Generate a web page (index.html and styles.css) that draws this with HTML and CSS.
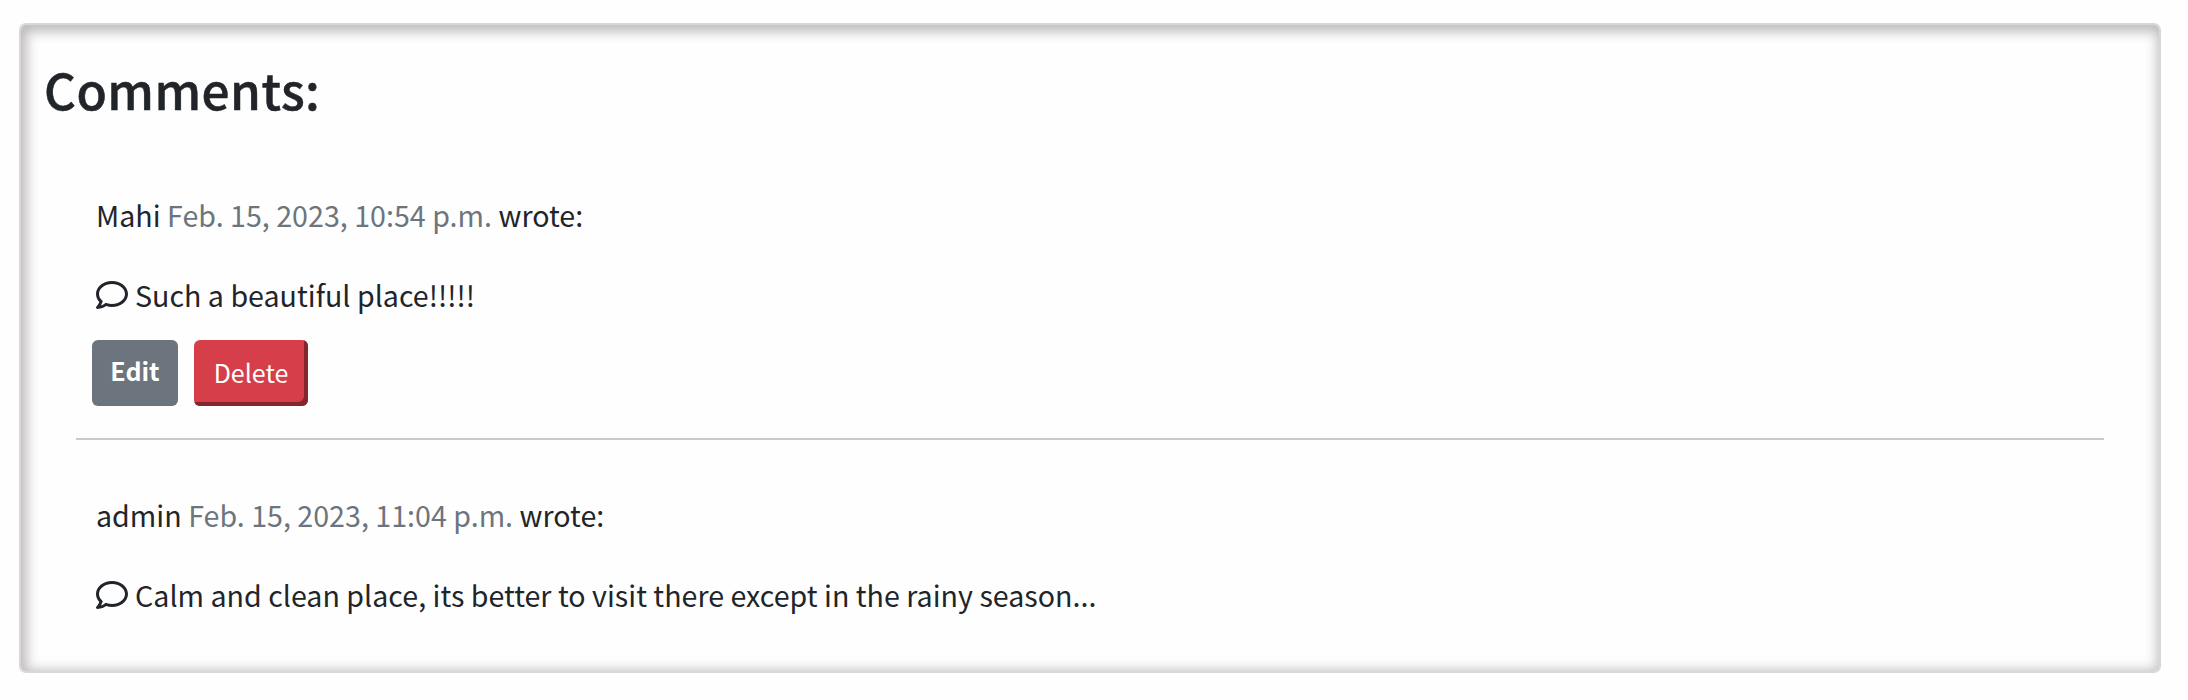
FILE: index.html
```html
<!DOCTYPE html>
<html lang="en">
<head>
<meta charset="utf-8">
<title>Comments</title>
<link rel="stylesheet" href="styles.css">
</head>
<body>
<section class="panel">
  <h2 class="title">Comments:</h2>
  <div class="list">
    <article class="comment">
      <p class="meta"><span>Mahi <span class="date">Feb. 15, 2023, 10:54 p.m.</span> wrote:</span></p>
      <p class="text"><svg class="icon" viewBox="0 0 512 512"><path d="M256 32C114.600 32 0 125.100 0 240c0 47.600 19.900 91.200 52.900 126.300C38 405.700 7 439.100 6.500 439.500c-6.600 7-8.400 17.200-4.600 26S14.400 480 24 480c61.500 0 110-25.700 139.100-46.300C192 442.800 223.200 448 256 448c141.400 0 256-93.100 256-208S397.400 32 256 32zm0 368c-26.700 0-53.100-4.100-78.400-12.100l-22.700-7.200-19.500 13.800c-14.300 10.100-33.900 21.400-57.500 29 7.300-12.100 14.400-25.700 19.900-40.200l10.600-28.100-20.600-21.800C69.700 314.100 48 282.200 48 240c0-88.200 93.300-160 208-160s208 71.800 208 160-93.300 160-208 160z"/></svg><span>Such a beautiful place!!!!!</span></p>
      <div class="actions">
        <button class="btn edit">Edit</button>
        <button class="btn delete">Delete</button>
      </div>
    </article>
    <hr class="rule">
    <article class="comment">
      <p class="meta"><span>admin <span class="date">Feb. 15, 2023, 11:04 p.m.</span> wrote:</span></p>
      <p class="text"><svg class="icon" viewBox="0 0 512 512"><path d="M256 32C114.600 32 0 125.100 0 240c0 47.600 19.900 91.200 52.900 126.300C38 405.700 7 439.100 6.500 439.500c-6.600 7-8.400 17.200-4.600 26S14.400 480 24 480c61.500 0 110-25.700 139.100-46.300C192 442.800 223.200 448 256 448c141.400 0 256-93.100 256-208S397.400 32 256 32zm0 368c-26.700 0-53.100-4.100-78.400-12.100l-22.700-7.200-19.500 13.800c-14.300 10.100-33.900 21.400-57.500 29 7.300-12.100 14.400-25.700 19.900-40.200l10.600-28.100-20.600-21.800C69.700 314.100 48 282.200 48 240c0-88.200 93.300-160 208-160s208 71.800 208 160-93.300 160-208 160z"/></svg><span>Calm and clean place, its better to visit there except in the rainy season...</span></p>
    </article>
  </div>
</section>
</body>
</html>
```
FILE: styles.css
```css
* { box-sizing: border-box; }
body {
  margin: 0;
  padding: 23px 27px 27px 19px;
  height: 700px;
  background: #fefefe;
  color: #212529;
  font-family: "Noto Sans CJK SC", "Noto Sans", sans-serif;
}
.panel {
  height: 650px;
  padding: 32px 55px 0 24px;
  border: 2px solid #d9d8d8;
  border-radius: 7px;
  background: #fefefe;
  box-shadow: inset 2px 3px 12px 4px #c0bcbc;
}
.title {
  margin: 0 0 0 -1px;
  font-size: 49.5px;
  line-height: 64px;
  font-weight: 500;
  letter-spacing: 0.45px;
  -webkit-text-stroke: 0.5px #212529;
}
.list { padding: 74px 0 0 31px; }
.comment { padding-left: 20px; }
.meta, .text {
  display: flex;
  align-items: center;
  margin: 0;
  height: 40px;
  font-size: 28.6px;
  letter-spacing: 0.02px;
  line-height: 40px;
  white-space: pre;
}
.text { margin-top: 40px; gap: 7px; }
.date { color: #6c757d; }
.icon { width: 32px; height: 32px; fill: #212529; }
.actions {
  display: flex;
  gap: 16px;
  margin: 25px 0 0 -4px;
}
.btn {
  height: 66px;
  border: 0;
  border-radius: 6px;
  color: #fff;
  font-family: inherit;
  font-size: 25px;
  line-height: 36px;
  padding: 0 0 2px;
}
.edit {
  width: 86px;
  padding-bottom: 6px;
  background: #6c757d;
  font-weight: 700;
}
.delete {
  width: 114px;
  background: #d63f4a;
  box-shadow: inset -4px -4px 0 #84262e;
}
.rule {
  height: 2px;
  margin: 32px 0 55px;
  border: 0;
  background: #c8cacb;
}
```
